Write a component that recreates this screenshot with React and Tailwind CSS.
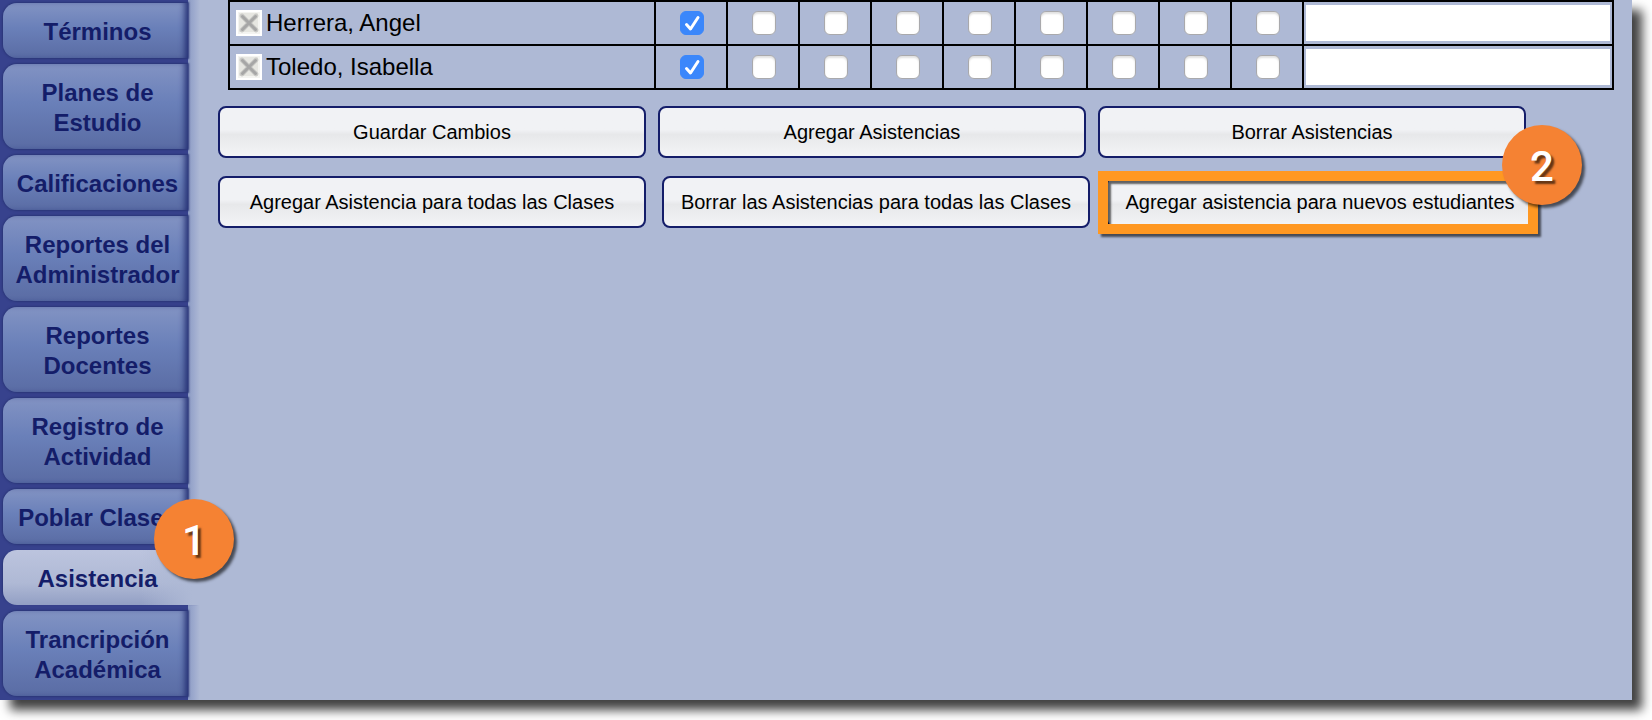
import React, { useState } from "react";
import { clsx } from "clsx";

const tabs = [
    "Términos",
    "Planes de Estudio",
    "Calificaciones",
    "Reportes del Administrador",
    "Reportes Docentes",
    "Registro de Actividad",
    "Poblar Clases",
    "Asistencia",
    "Trancripción Académica",
];

const students = ["Herrera, Angel", "Toledo, Isabella"];

const columns = [1, 2, 3, 4, 5, 6, 7, 8, 9];

function Badge({ children, className }) {
    return (
        <span className={clsx("absolute z-10 flex size-20 items-center justify-center rounded-full bg-[#f58233] pt-1 font-['Roboto',sans-serif] text-[42px] leading-none font-medium text-white shadow-[3px_3px_3px_rgba(0,0,0,0.6)] text-shadow-[3px_3px_2px_rgba(0,0,0,0.6)]", className)}>
            {children}
        </span>
    );
}

function Tab({ label, active, onSelect }) {
    return (
        <li className="relative">
            <a
                href="#"
                onClick={onSelect}
                className={clsx(
                    "block rounded-l-[14px] pt-[14px] pb-[11px] pl-2 text-center text-2xl leading-[30px] font-bold text-[#141d69]",
                    // the active tab runs on into the page
                    active
                        ? "-mr-3 bg-[linear-gradient(to_right,transparent_70%,#aeb9d5_96%),linear-gradient(to_bottom,#bcc4de,#afb9d5_60%,#929fc4)] pr-4 shadow-[-2px_0_2px_-1px_#2a3678]"
                        : "bg-linear-to-b from-[#8293c3] via-[#6a80b9] via-45% to-[#5a6ca4] pr-1 shadow-[inset_-6px_0_6px_-3px_#232e73,0_0_2px_1px_#2a3678]"
                )}
            >
                {label}
            </a>
            {label === "Asistencia" && <Badge className="-top-[51px] left-[151px]">1</Badge>}
        </li>
    );
}

function ActionButton({ children }) {
    return (
        <button
            type="button"
            className="h-[52px] w-full rounded-lg border-2 border-[#141d69] bg-linear-to-b from-[#f1f2f5] from-45% via-[#e7e8ea] via-55% to-[#f3f4f6] text-xl text-black"
        >
            {children}
        </button>
    );
}

function RemoveIcon() {
    return (
        <svg viewBox="0 0 26 26" className="size-[26px]" aria-hidden="true">
            <rect width="26" height="26" fill="#fff" />
            <rect x="2" y="2" width="22" height="22" fill="#f4f4f1" />
            <rect x="3" y="3" width="19" height="19" fill="#e6e6e1" />
            <path d="M6 6l14 14M20 6L6 20" stroke="#c9c9c6" strokeWidth="4.6" strokeLinecap="round" />
            <path d="M6.5 6.5l13 13M19.5 6.5l-13 13" stroke="#a6a6a6" strokeWidth="3" strokeLinecap="round" />
        </svg>
    );
}

function StudentRow({ name }) {
    const [marks, setMarks] = useState({ 1: true });

    return (
        <tr className="h-11">
            <td className="border-2 border-black">
                <div className="flex items-center gap-1 pl-1.5 text-2xl leading-8">
                    <button type="button" aria-label={"Quitar " + name}>
                        <RemoveIcon />
                    </button>
                    <span>{name}</span>
                </div>
            </td>
            {columns.map((col) => (
                <td key={col} className="border-2 border-black">
                    <div className="relative flex items-center justify-center pl-0.5">
                        <input
                            type="checkbox"
                            aria-label={name + " " + col}
                            checked={!!marks[col]}
                            onChange={(e) => setMarks({ ...marks, [col]: e.target.checked })}
                            className="peer size-6 appearance-none rounded-md border border-[#a9a9ac] bg-white shadow-[inset_0_2px_2px_rgba(0,0,0,0.12)] checked:border-[#3b87fb] checked:bg-[#3b87fb] checked:shadow-none"
                        />
                        <svg viewBox="0 0 24 24" className="pointer-events-none absolute hidden size-6 peer-checked:block" aria-hidden="true">
                            <path d="M6.5 13.5l4 4.5 7.5-11.5" fill="none" stroke="#fff" strokeWidth="3" strokeLinecap="round" strokeLinejoin="round" />
                        </svg>
                    </div>
                </td>
            ))}
            <td className="border-2 border-black px-0.5">
                <input type="text" aria-label={"Comentario " + name} className="block h-9 w-full bg-white px-2 text-xl outline-none" />
            </td>
        </tr>
    );
}

function App() {
    const [current, setCurrent] = useState("Asistencia");

    return (
        <div className="overflow-hidden bg-white pr-5 pb-5 font-['Liberation_Sans',Arial,sans-serif] text-black">
            <div className="flex bg-[#aeb9d5] shadow-[10px_10px_10px_rgba(0,0,0,0.75)]">
                <nav className="w-[188px] shrink-0 bg-[#37428d] pt-[3px] pb-1 pl-[3px]">
                    <ul className="flex flex-col gap-1.5">
                        {tabs.map((label) => (
                            <Tab key={label} label={label} active={label === current} onSelect={() => setCurrent(label)} />
                        ))}
                    </ul>
                </nav>

                <main className="flex min-w-0 grow bg-[#aeb9d5]">
                    <div className="w-3 shrink-0 bg-linear-to-r from-[#8d9cc5] via-[#9daace] to-[#aeb9d5]" />
                    <div className="min-w-0 grow px-[18px]">
                        <div className="pl-2.5">
                            <table className="w-full table-fixed border-collapse">
                                <colgroup>
                                    <col className="w-[426px]" />
                                    {columns.map((col) => (
                                        <col key={col} className="w-[72px]" />
                                    ))}
                                    <col />
                                </colgroup>
                                <tbody>
                                    {students.map((name) => (
                                        <StudentRow key={name} name={name} />
                                    ))}
                                </tbody>
                            </table>
                        </div>

                        <div className="mt-4 grid max-w-[1308px] grid-cols-3 gap-3">
                            <ActionButton>Guardar Cambios</ActionButton>
                            <ActionButton>Agregar Asistencias</ActionButton>
                            <ActionButton>Borrar Asistencias</ActionButton>
                        </div>
                        <div className="mt-[18px] grid max-w-[1316px] grid-cols-3 gap-4">
                            <ActionButton>Agregar Asistencia para todas las Clases</ActionButton>
                            <ActionButton>Borrar las Asistencias para todas las Clases</ActionButton>
                            <div className="relative">
                                <ActionButton>Agregar asistencia para nuevos estudiantes</ActionButton>
                                <div className="pointer-events-none absolute -top-[5px] -right-1 -bottom-1.5 -left-2 border-10 border-[#ff9822] shadow-[3px_3px_2px_rgba(0,0,0,0.6),inset_3px_3px_2px_rgba(0,0,0,0.6)]" />
                                <Badge className="-top-[51px] -right-12">2</Badge>
                            </div>
                        </div>
                    </div>
                </main>
            </div>
        </div>
    );
}

export default App;
